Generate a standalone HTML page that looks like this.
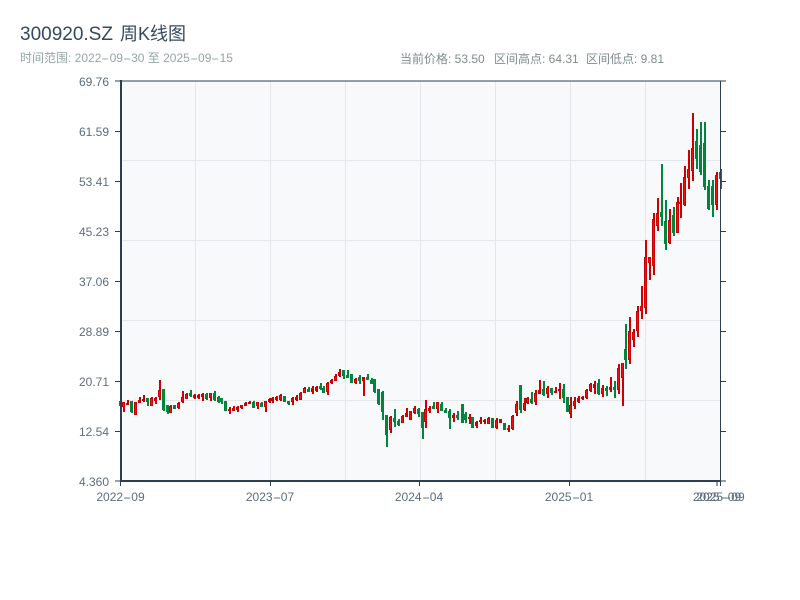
<!DOCTYPE html>
<html>
<head>
<meta charset="utf-8">
<style>
html,body{margin:0;padding:0;background:#fff;width:800px;height:600px;overflow:hidden;position:relative}
svg{display:block;position:absolute;left:0;top:0}
text,.t{font-family:"WenQuanYi Zen Hei","Liberation Sans","Noto Sans CJK SC",sans-serif}
.t{position:absolute;font-size:12px;line-height:14px;white-space:nowrap}
.x{color:#5d6d7e;top:490px;width:60px;text-align:center}
.h{display:inline-block;width:8.2px;text-align:left;transform:scaleX(2.05);transform-origin:0 50%}
</style>
</head>
<body>
<svg id="c" width="800" height="600" viewBox="0 0 800 600" xmlns="http://www.w3.org/2000/svg">
<rect width="800" height="600" fill="#fff"/>
<text x="20" y="40" font-size="19" fill="#34495e">300920.SZ</text>
<text x="120" y="40" font-size="18" fill="#34495e">周K线图</text>
<text x="400" y="63" font-size="12" fill="#7f8c8d">当前价格: 53.50</text>
<text x="494" y="63" font-size="12" fill="#7f8c8d">区间高点: 64.31</text>
<text x="586" y="63" font-size="12" fill="#7f8c8d">区间低点: 9.81</text>
<rect x="121" y="81" width="599" height="400" fill="#f8f9fb"/>
<path d="M121 160.5H720M121 240.5H720M121 320.5H720M121 400.5H720M195.5 81V481M270.5 81V481M345.5 81V481M420.5 81V481M495.5 81V481M570.5 81V481M645.5 81V481" stroke="#e4e6ea" stroke-width="1" fill="none"/>
<g id="k" shape-rendering="crispEdges"></g>
<path d="M115 81H726M720.5 81V481M115 131.5H121M115 181.5H121M115 231.5H121M115 281.5H121M115 331.5H121M115 381.5H121M115 431.5H121M115 481H121M720 131.5H726M720 181.5H726M720 231.5H726M720 281.5H726M720 331.5H726M720 381.5H726M720 431.5H726M720 481H726M120.5 481V486M270.5 481V486M419.5 481V486M569.5 481V486M717 481V486M720.5 481V486" stroke="#2c3e50" stroke-width="1" fill="none"/>
<path d="M121 80V482M120 481H720" stroke="#2c3e50" stroke-width="2" fill="none"/>
<g font-size="12" fill="#5d6d7e" text-anchor="end">
<text x="109" y="86">69.76</text>
<text x="109" y="136">61.59</text>
<text x="109" y="186">53.41</text>
<text x="109" y="236">45.23</text>
<text x="109" y="286">37.06</text>
<text x="109" y="336">28.89</text>
<text x="109" y="386">20.71</text>
<text x="109" y="436">12.54</text>
<text x="109" y="486">4.360</text>
</g>
</svg>
<div class="t" style="left:20px;top:51px;color:#95a5a6">时间范围: 2022<span class="h">-</span>09<span class="h">-</span>30 至 2025<span class="h">-</span>09<span class="h">-</span>15</div>
<div class="t x" style="left:90.5px">2022<span class="h">-</span>09</div>
<div class="t x" style="left:240px">2023<span class="h">-</span>07</div>
<div class="t x" style="left:389px">2024<span class="h">-</span>04</div>
<div class="t x" style="left:539px">2025<span class="h">-</span>01</div>
<div class="t x" style="left:687px">2025<span class="h">-</span>09</div>
<div class="t x" style="left:690.5px">2025<span class="h">-</span>09</div>
<script>
var G=[
[110,360,"g30,122,122,138,138 r41,126,126,140,156 r53,120,128,134,134 g65,122,122,156,158 r77,125,125,163,165 r88,110,120,128,128 r101,105,118,124,126 g112,114,114,126,138 r124,111,113,137,137 r136,110,113,122,130 r149,60,90,110,120 g160,87,87,150,153 g172,135,135,155,162 r182,136,138,158,160 g193,135,135,146,147 r205,125,128,142,145 r217,93,112,128,130 r229,99,101,115,118 g241,90,100,110,110 r253,102,105,114,117 r265,102,106,114,117 r278,98,101,110,123 g290,100,101,117,120 r302,98,100,114,123 g314,93,100,122,123 g326,108,112,127,130 g335,114,114,125,133 g346,123,124,153,153 r359,141,148,153,162 r370,138,143,153,153 r382,137,142,150,156 r394,135,136,146,147 r406,127,129,137,137 r418,123,126,132,133 g430,123,125,143,145 r442,126,127,140,147 g454,126,128,140,141 r466,123,124,143,156 r478,114,117,125,128"],
[270,360,"r8,111,114,124,128 r20,108,111,120,122 r32,102,105,120,122 g44,108,108,125,126 g56,122,122,130,135 r68,112,114,127,137 r80,105,112,122,122 r92,95,100,120,120 r104,82,84,98,100 g116,82,86,95,96 r128,78,84,95,102 r140,78,81,93,95 g152,69,78,87,89 g161,78,84,98,99 r173,66,68,95,105 r185,58,60,70,72 r197,43,48,62,64 r209,28,36,48,53 g221,30,30,48,58 g233,30,44,52,54 g245,42,42,68,69 r257,53,56,69,72 g269,45,50,62,72 r281,52,52,64,108 g293,42,50,60,61 g305,55,60,72,74 g314,57,57,95,98 g326,88,88,134,135 g338,93,95,155,180 g350,165,165,224,261 r362,168,170,210,219 g374,147,175,188,201 g386,178,182,195,198 r398,165,168,189,190 r410,144,158,170,171 r422,153,153,180,180 r434,138,144,160,163 g446,144,147,162,171 g456,156,156,203,237 r467,120,148,188,204 r478,138,144,153,158"],
[430,360,"g10,126,138,147,147 r22,126,127,147,159 g34,126,132,153,153 g46,144,150,158,159 g58,147,153,174,207 r70,159,165,174,186 g82,153,165,175,180 g96,132,132,189,189 g107,156,162,180,189 r119,162,171,177,192 g128,171,171,204,204 r140,183,186,198,204 r152,171,180,186,192 r164,177,180,186,192 r176,171,174,192,192 g188,174,174,204,204 r200,174,180,204,207 r212,177,177,189,189 g223,189,189,210,210 r236,195,204,210,216 r247,165,168,208,210 r260,123,132,159,168 g271,75,75,150,159 r282,114,129,150,153 r293,111,114,128,132 g305,96,117,128,132 r317,90,99,126,135 r329,60,90,102,102 g341,63,87,105,108 r353,78,84,102,114 g365,84,84,99,105 r377,81,93,99,99 r389,69,87,93,117 g401,72,87,114,129 g413,111,111,156,156 r422,111,135,162,174 r434,111,123,138,147 r446,108,114,126,129 r458,108,111,117,120 r470,87,90,114,117"],
[590,270,"r2,339,342,363,366 r13,333,342,354,372 g25,327,339,372,375 r37,345,354,372,381 g50,348,354,364,378 r62,321,351,360,366 g74,333,351,360,384 r86,282,294,360,372 r96,280,280,325,408 g107,162,237,270,297 r118,141,183,270,282 r131,177,186,210,231 r143,108,123,183,201 r155,48,108,123,147"],
[630,100,"r46,420,471,624,642 r58,471,471,489,540 r70,339,358,498,525 r82,294,339,378,393 g94,192,336,351,378 g106,300,363,432,450 r118,327,360,430,432 g129,321,345,400,408 r141,291,306,398,398 r152,249,306,312,354 r164,198,232,317,317 r175,150,208,234,267 r188,39,144,212,243 g200,87,123,178,207 g212,66,135,216,225 g224,66,130,261,270 g236,240,258,327,330 g248,240,258,315,351 r260,216,225,315,330 g272,207,216,237,267"]
];
var h="";
function R(x,y,w,H,f){return '<rect x="'+x+'" y="'+Math.round(y)+'" width="'+w+'" height="'+Math.max(1,Math.round(H))+'" fill="'+f+'"/>';}
G.forEach(function(g){
 g[2].split(" ").forEach(function(s){
  var t=s[0],v=s.slice(1).split(",").map(Number);
  var cx=g[0]+v[0]/3,a=g[1]+v[1]/3,b=g[1]+v[2]/3,c=g[1]+v[3]/3,d=g[1]+v[4]/3;
  var L=Math.round(cx-1.5);
  var dark=t=="r"?"#cc0000":"#00863c";
  h+=R(L+1,a,2,d-a,dark);
  h+=R(L,b,3,c-b,dark);
  if(t=="r"&&c-b>4)h+=R(L+1,b+1,1,c-b-2,"#f01010");
 });
});
document.getElementById("k").innerHTML=h;
</script>
</body>
</html>
